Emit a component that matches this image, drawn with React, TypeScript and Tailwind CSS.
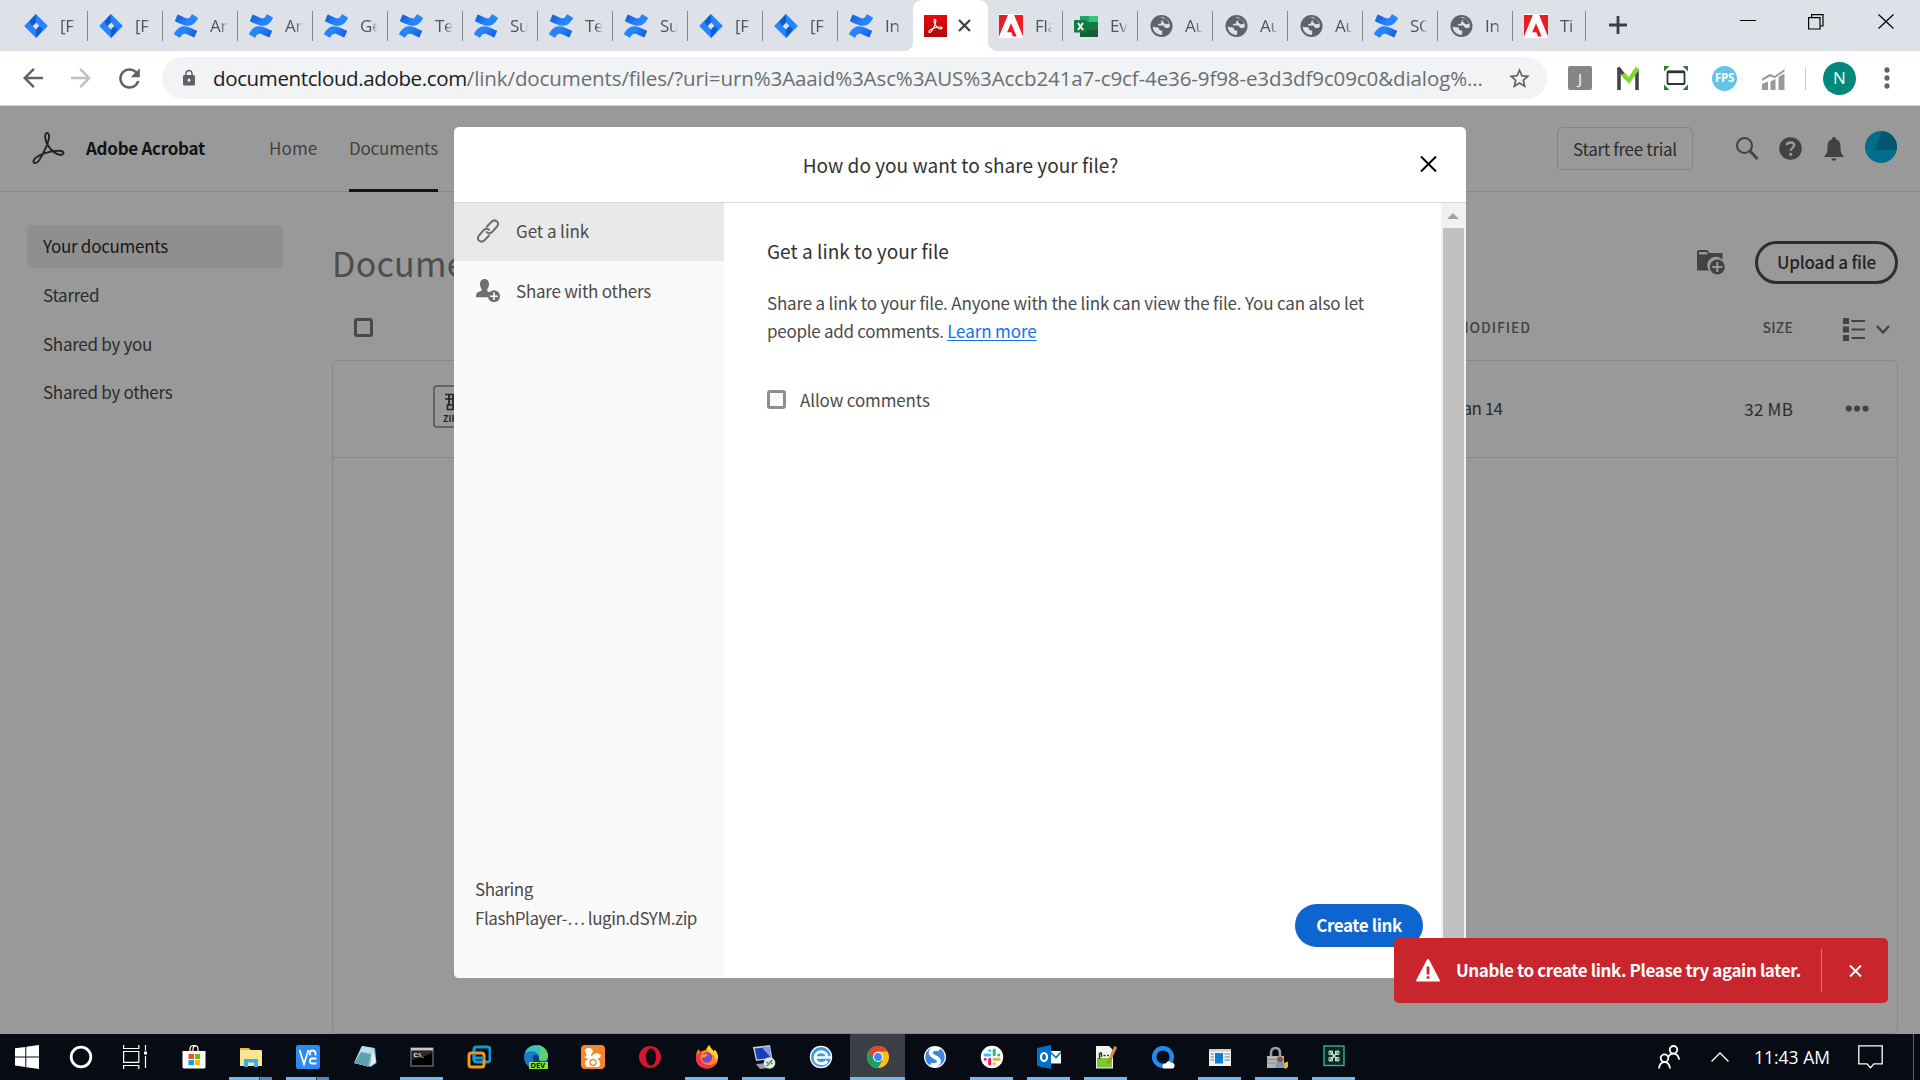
import type { FC, ReactNode } from 'react';
import { MdArrowBack, MdArrowForward, MdLock, MdMoreVert, MdRefresh, MdStarBorder } from 'react-icons/md';
import clsx from 'clsx';

type TabIcon = 'jira' | 'confluence' | 'acrobat' | 'adobe' | 'excel' | 'globe';

interface BrowserTab {
  icon: TabIcon;
  label: string;
  active?: boolean;
}

const TABS: BrowserTab[] = [
  { icon: 'jira', label: '[F' },
  { icon: 'jira', label: '[F' },
  { icon: 'confluence', label: 'An' },
  { icon: 'confluence', label: 'An' },
  { icon: 'confluence', label: 'Ge' },
  { icon: 'confluence', label: 'Te' },
  { icon: 'confluence', label: 'Su' },
  { icon: 'confluence', label: 'Te' },
  { icon: 'confluence', label: 'Su' },
  { icon: 'jira', label: '[F' },
  { icon: 'jira', label: '[F' },
  { icon: 'confluence', label: 'In' },
  { icon: 'acrobat', label: '', active: true },
  { icon: 'adobe', label: 'Fla' },
  { icon: 'excel', label: 'Ev' },
  { icon: 'globe', label: 'Au' },
  { icon: 'globe', label: 'Au' },
  { icon: 'globe', label: 'Au' },
  { icon: 'confluence', label: 'SC' },
  { icon: 'globe', label: 'In' },
  { icon: 'adobe', label: 'Ti' },
];

const TREFOIL =
  'M14.5 .5C11.500 .5 12.300 8 15.500 13C18.500 18 24 22.500 28.500 22.500C32.500 21.500 31.500 18.500 27 18.200C18 18 6 22 2 26.500C-1 30.500 3 32.500 6.500 28C11 21.500 16 10 16.500 5C16.800 2 16 .5 14.500 .5Z';

const JiraIcon = () => (
  <svg width="24" height="24" viewBox="0 0 24 24">
    <path fill="#2684ff" fillRule="evenodd" d="M12 0l11.2 11.2q.8.8 0 1.6L12 24 .8 12.8q-.8-.8 0-1.6zm0 8.6L8.6 12l3.4 3.4 3.4-3.4z" />
    <path fill="#0f5bd0" d="M12 0v8.6L8.6 12 5.5 8.9Q5.6 6.300 12 0zM12 24v-8.600L15.400 12l3.100 3.100Q18.400 17.700 12 24z" />
  </svg>
);

const ConfluenceIcon = () => (
  <svg width="24" height="24" viewBox="0 0 24 24">
    <defs>
      <linearGradient id="cf-a" x1="0" x2="1" y1="0" y2="0.4">
        <stop offset="0" stopColor="#0f5bd3" />
        <stop offset="0.7" stopColor="#2684ff" />
      </linearGradient>
      <linearGradient id="cf-b" x1="1" x2="0" y1="1" y2="0.6">
        <stop offset="0" stopColor="#0f5bd3" />
        <stop offset="0.7" stopColor="#2684ff" />
      </linearGradient>
    </defs>
    <path
      fill="url(#cf-b)"
      d="M.87 18.257c-.248.382-.53.875-.763 1.245a.764.764 0 0 0 .255 1.04l4.965 3.054a.764.764 0 0 0 1.058-.26c.199-.332.454-.763.733-1.221 1.967-3.247 3.945-2.853 7.508-1.146l4.957 2.337a.764.764 0 0 0 1.028-.382l2.364-5.346a.764.764 0 0 0-.382-1 599.851 599.851 0 0 1-4.965-2.361C10.911 10.97 5.224 11.185.87 18.257z"
    />
    <path
      fill="url(#cf-a)"
      d="M23.131 5.743c.249-.405.531-.875.764-1.25a.764.764 0 0 0-.256-1.034L18.675.404a.764.764 0 0 0-1.058.26c-.195.335-.451.763-.734 1.225-1.966 3.246-3.945 2.85-7.508 1.146L4.437.694a.764.764 0 0 0-1.027.382L1.046 6.422a.764.764 0 0 0 .382 1c1.039.49 3.105 1.467 4.965 2.361 6.698 3.246 12.392 3.029 16.738-4.04z"
    />
  </svg>
);

const AcrobatTabIcon = () => (
  <svg width="23" height="22" viewBox="0 0 23 22">
    <defs>
      <linearGradient id="acro" x1="0" x2="0" y1="0" y2="1">
        <stop offset="0" stopColor="#ec0a0a" />
        <stop offset="1" stopColor="#b00a0a" />
      </linearGradient>
    </defs>
    <rect width="23" height="22" fill="url(#acro)" />
    <path d={TREFOIL} transform="translate(4.500 4) scale(0.44)" fill="none" stroke="#fff" strokeWidth="2.600" />
  </svg>
);

const AdobeIcon = () => (
  <svg width="24" height="24" viewBox="0 0 24 24">
    <path fill="#fff" d="M0 0h24v24H0z" />
    <path fill="#ed1c24" d="M13.966 22.624l-1.690-4.281H8.122l3.892-9.144 5.662 13.425zM8.884 1H0v21.624zM24 1h-8.884L24 22.624z" />
  </svg>
);

const ExcelIcon = () => (
  <svg width="24" height="22" viewBox="0 0 24 22">
    <path fill="#21a366" d="M6 1h9v7H6z" />
    <path fill="#33c481" d="M15 1h9v6h-9z" />
    <path fill="#107c41" d="M6 7h9v7H6zM15 7h9v7h-9z" />
    <path fill="#185c37" d="M6 14h18v8H6z" />
    <path fill="#107c41" d="M15 11h9v4h-9z" />
    <rect y="5" width="13" height="12.500" rx="1" fill="#107c41" />
    <path stroke="#fff" strokeWidth="2" d="M4 8l5 7M9 8l-5 7" />
  </svg>
);

const GlobeIcon = () => (
  <svg width="24" height="24" viewBox="0 0 24 24">
    <circle cx="12.500" cy="12" r="11" fill="#5f6368" />
    <path
      fill="#dee1e8"
      d="M3.800 12.500q1.500 1 4.200.8c1.500 0 2 .7 2.200 2 .2 1 1 1.200 2.200 1.200 1.200.2 1 1.500.8 2.700l-.5 1.800C8 21 3.600 17.300 3.800 12.500zM10.800 3.500q2.500-.6 4.700.1c-.2 1.700-.5 2.700-2 3-1.300.3-1.200 1-1.300 2-.2 1.200-1 1.400-2.200 1.400-1 0-1 .6-.8 1.500h4c1.600 0 2 .6 2.300 1.600.3.900 1 .9 2.200.9 1.500 0 2.500-.5 3.200-1.500.2-3.500-1.700-6.500-4.900-8.100"
    />
    <path fill="#5f6368" d="M15.500 4c-.3 2-1 2.800-2.300 3l3 3.200L20 10l-1-3z" />
  </svg>
);

const tabIcon = (icon: TabIcon) => {
  switch (icon) {
    case 'jira':
      return <JiraIcon />;
    case 'confluence':
      return <ConfluenceIcon />;
    case 'acrobat':
      return <AcrobatTabIcon />;
    case 'adobe':
      return <AdobeIcon />;
    case 'excel':
      return <ExcelIcon />;
    default:
      return <GlobeIcon />;
  }
};

const TabStrip = () => (
  <div className="flex h-[51px] bg-[#dee1e8] pl-[13px]">
    {TABS.map((tab, index) =>
      tab.active ? (
        <div key={index} className="relative flex h-[51px] w-[75px] items-center rounded-t-[9px] bg-white pl-[11px]">
          <span className="absolute bottom-0 -left-[9px] size-[9px] bg-[radial-gradient(circle_at_0_0,transparent_9px,white_9px)]" />
          <span className="absolute -right-[9px] bottom-0 size-[9px] bg-[radial-gradient(circle_at_100%_0,transparent_9px,white_9px)]" />
          {tabIcon(tab.icon)}
          <svg width="13" height="13" viewBox="0 0 13 13" className="ml-[11px]">
            <path d="M1 1l11 11M12 1L1 12" stroke="#3c4043" strokeWidth="2.200" />
          </svg>
        </div>
      ) : (
        <div
          key={index}
          className={clsx(
            'relative flex h-[51px] items-center pl-[11px]',
            index === TABS.length - 1 ? 'w-[73px]' : 'w-[75px]',
          )}
        >
          <span className="flex w-6 shrink-0 items-center">{tabIcon(tab.icon)}</span>
          <span className="ml-[12px] w-[21px] text-[17px] leading-[26px] tracking-[-0.3px] whitespace-nowrap text-[#50545a] [mask-image:linear-gradient(to_right,black_50%,transparent_85%)]">
            {tab.label}
          </span>
          {index !== 11 && <span className="ml-auto h-[30px] w-[1.5px] bg-[#85898e]" />}
        </div>
      ),
    )}
    <svg width="18" height="18" viewBox="0 0 18 18" className="mt-4 ml-[23px]">
      <path d="M9 0v18M0 9h18" stroke="#3c4043" strokeWidth="2.800" />
    </svg>
    <svg width="16" height="16" viewBox="0 0 16 16" className="mt-[13px] ml-auto">
      <path d="M0 7.500h16" stroke="#000" />
    </svg>
    <svg width="16" height="16" viewBox="0 0 16 16" className="mt-[14px] ml-[52px]" fill="none" stroke="#000" strokeWidth="1.200">
      <path d="M.6 3.600h11.400v11.400H.6zM3.600 3.600V.6h11.400v11.400h-3" />
    </svg>
    <svg width="16" height="15" viewBox="0 0 16 15" className="mt-[14px] mr-[26px] ml-[54px]">
      <path d="M.5.5l15 14M15.500.5l-15 14" stroke="#000" strokeWidth="1.200" />
    </svg>
  </div>
);

const Toolbar = () => (
  <div className="flex h-[55px] items-center border-b border-[#cfcfcf] bg-white">
    <MdArrowBack className="ml-[18px] size-[30px] text-[#5f6368]" />
    <MdArrowForward className="ml-[18px] size-[30px] text-[#bdc0c4]" />
    <MdRefresh className="ml-[18px] size-[31px] text-[#5f6368]" />
    <div className="ml-[17px] flex h-[42px] w-[1385px] items-center rounded-full bg-[#f1f3f4] pl-[18px]">
      <MdLock className="size-[18px] text-[#5f6368]" />
      <div className="ml-[15px] text-[20.5px] leading-[38px] whitespace-nowrap text-[#6a6e73]">
        <span className="tracking-[-0.37px] text-[#202124]">documentcloud.adobe.com</span>
        <span className="tracking-[-0.1px]">
          /link/documents/files/?uri=urn%3Aaaid%3Asc%3AUS%3Accb241a7-c9cf-4e36-9f98-e3d3df9c09c0&amp;dialog%...
        </span>
      </div>
      <MdStarBorder className="mr-[15px] ml-auto size-[25px] text-[#5f6368]" />
    </div>
    <span className="ml-[21px] flex size-6 items-center justify-center rounded-[2px] bg-[#858585] text-[15px] text-white">
      J
    </span>
    <svg width="24" height="26" viewBox="0 0 24 26" className="ml-[24px]">
      <path d="M3 25V3M21 25V5" fill="none" stroke="#454548" strokeWidth="3.600" />
      <path d="M2 2.500l9 11.500" fill="none" stroke="#454548" strokeWidth="3.600" />
      <path d="M7 9l6 6.500L21.500 3" fill="none" stroke="#85d52c" strokeWidth="4.500" />
    </svg>
    <svg width="24" height="24" viewBox="0 0 24 24" className="ml-[24px]">
      <path d="M0 0h5.500L0 5.500zM24 0v5.500L18.500 0zM0 24v-5.500L5.500 24zM24 24h-5.500l5.500-5.500z" fill="#2e7d32" />
      <rect x="3.500" y="5.500" width="17" height="12.500" rx="1" fill="#fff" stroke="#333" strokeWidth="1.800" />
      <path d="M3.500 6h17" stroke="#333" strokeWidth="2.400" />
    </svg>
    <span className="ml-[24px] flex size-[25px] items-center justify-center rounded-full bg-[#63c3e6] text-[11.5px] font-bold tracking-[-0.3px] text-white">
      FPS
    </span>
    <svg width="24" height="22" viewBox="0 0 24 22" className="mt-1 ml-[24px]" fill="#9a9a9a">
      <path d="M1 15l6-2.500V21H1zM9.500 12.500l5-2.500v11h-5zM17.500 8l6-3.500V21h-6z" />
      <path d="M1 9.500L9 5l5 2L23.500 0v2.500L14 9 9 7.500l-8 4.500z" />
    </svg>
    <span className="ml-[20px] h-[23px] w-px bg-[#c8cbcf]" />
    <span className="ml-[17px] flex size-[33px] items-center justify-center rounded-full bg-[#00897b] text-[17px] text-white">
      N
    </span>
    <MdMoreVert className="ml-[15px] size-8 text-[#5f6368]" />
  </div>
);

const AppHeader = () => (
  <header className="flex h-[86px] border-b border-[#e1e1e1]">
    <svg width="33" height="33" viewBox="-0.500 -0.500 33 33" className="mt-[26px] ml-[32px]" fill="none">
      <path d={TREFOIL} stroke="#3b3b3b" strokeWidth="1.900" />
    </svg>
    <span className="ml-[21px] w-[183px] text-[17px] leading-[84px] font-bold tracking-[-0.28px] text-[#222]">Adobe Acrobat</span>
    <span className="w-[80px] text-[17px] leading-[84px] tracking-[0.1px] text-[#6e6e6e]">Home</span>
    <span className="h-[86px] w-[89px] border-b-[3px] border-[#222] text-[17px] leading-[84px] tracking-[-0.2px] text-[#6e6e6e]">
      Documents
    </span>
    <button
      type="button"
      className="mt-[21px] ml-auto h-[43px] w-[136px] rounded-[5px] border border-[#dcdcdc] text-[17px] leading-[41px] tracking-[-0.31px] text-[#4b4b4b]"
    >
      Start free trial
    </button>
    <svg width="23" height="23" viewBox="0 0 23 23" className="mt-[31px] ml-[43px]" fill="none" stroke="#6e6e6e" strokeWidth="2">
      <circle cx="8.500" cy="8.500" r="7.500" />
      <path d="M14 14l7.500 8" strokeWidth="2.800" />
    </svg>
    <svg width="23" height="23" viewBox="0 0 23 23" className="mt-[31px] ml-[20px]">
      <circle cx="11.500" cy="11.500" r="11.300" fill="#6e6e6e" />
      <path d="M7.800 8.300C8 4.500 15.200 4.500 15.200 8.300c0 2.400-3.500 2.700-3.500 5.400" fill="none" stroke="#fff" strokeWidth="2.400" />
      <circle cx="11.700" cy="17.300" r="1.600" fill="#fff" />
    </svg>
    <svg width="20" height="24" viewBox="0 0 20 24" className="mt-[31px] ml-[22px]" fill="#6e6e6e">
      <path d="M10 0c1.300 0 2 .9 2 2.200 3.500 1 4.500 4 4.500 7.500 0 6 1 7.300 3 9.300V20H.5v-1c2-2 3-3.300 3-9.300C3.500 6.200 4.500 3.200 8 2.200 8 .9 8.700 0 10 0zM7.500 21.500h5c-.3 3-4.700 3-5 0z" />
    </svg>
    <svg width="32" height="32" viewBox="0 0 32 32" className="mt-[25px] mr-[23px] ml-[21px]">
      <circle cx="16" cy="16" r="16" fill="#00b8e6" />
      <path d="M16 0C27 0 32 9 32 16v3H9.500L17 0z" fill="#0090b8" />
    </svg>
  </header>
);

const NAV_ITEMS = ['Your documents', 'Starred', 'Shared by you', 'Shared by others'];

const SideNav = () => (
  <nav className="mt-[33px] ml-[27px] flex w-[256px] flex-col gap-[5.8px] text-[17px] leading-[41px] tracking-[-0.28px] text-[#4b4b4b]">
    {NAV_ITEMS.map((item, index) => (
      <span key={item} className={clsx('h-[43px] rounded-[5px] pl-4', index === 0 && 'bg-[#eee] text-[#2c2c2c]')}>
        {item}
      </span>
    ))}
  </nav>
);

const FileTable = () => (
  <main className="mr-[22px] ml-[49px] flex flex-1 flex-col">
    <div className="mt-[49px] flex h-[43px] items-center">
      <h1 className="text-[34px] leading-[43px] tracking-[0.25px] text-[#808080]">Documents</h1>
      <svg width="28" height="25" viewBox="0 0 28 25" className="ml-auto">
        <path fill="#6e6e6e" d="M0 1.500L1.500 0H10l2.500 3H25.500v7A8.500 8.500 0 0 0 12 20.500H0z" />
        <path fill="#fff" d="M2 2h7.500l1.500 2.500H2z" />
        <circle cx="20.300" cy="17" r="7.500" fill="#6e6e6e" />
        <path stroke="#fff" strokeWidth="2" d="M20.300 12v10M15.300 17h10" />
      </svg>
      <button
        type="button"
        className="ml-[30px] h-[43px] w-[143px] rounded-full border-[3px] border-[#4b4b4b] pb-[2px] text-[17px] leading-[35px] font-medium tracking-[-0.22px] whitespace-nowrap text-[#3b3b3b]"
      >
        Upload a file
      </button>
    </div>

    <div className="mt-[33px] flex h-5 items-center pr-2 text-[14px] leading-5 font-medium text-[#6e6e6e]">
      <span className="ml-[22px] size-[19px] rounded-[3px] border-[3px] border-[#7a7a7a]" />
      <span className="ml-auto w-[200px] tracking-[0.9px]">MODIFIED</span>
      <span className="w-[136px] text-right tracking-[0.2px]">SIZE</span>
      <svg width="22" height="23" viewBox="0 0 22 23" className="mt-[5px] ml-[50px]" fill="#6e6e6e">
        <path d="M0 0h6v6H0zM0 8.500h6v6H0zM0 17h6v6H0zM8.500 2H22v2H8.500zM8.500 10.500H22v2H8.500zM8.500 19H22v2H8.500z" />
      </svg>
      <svg width="14" height="9" viewBox="0 0 14 9" className="mt-1 ml-[11px]">
        <path d="M1 1l6 6.500L13 1" fill="none" stroke="#6e6e6e" strokeWidth="2.400" />
      </svg>
    </div>

    <div className="mt-[23px] flex-1 rounded-[6px] border border-[#e1e1e1]">
      <div className="flex h-[97px] items-center border-b border-[#e1e1e1] pr-7 pb-[1px] text-[17px] leading-[30px] text-[#4b4b4b]">
        <svg width="43" height="43" viewBox="0 0 43 43" className="mb-[5px] ml-[100px]">
          <rect x="1" y="1" width="41" height="41" rx="3" fill="none" stroke="#8a8a8a" strokeWidth="1.500" />
          <path d="M12 9.500h12M12 14h12M16 9.500v10M20 9.500V20M14.500 20H20v4.500h-5.500z" stroke="#3b3b3b" strokeWidth="1.700" fill="none" />
          <text x="10" y="37" fontSize="9" fontWeight="700" fill="#3b3b3b">
            ZIP
          </text>
        </svg>
        <span className="ml-auto w-[203px] pb-0.5 tracking-[-0.55px]">Jan 14</span>
        <span className="w-[136px] text-right tracking-[0.2px]">32 MB</span>
        <svg width="24" height="7" viewBox="0 0 24 7" className="ml-[52px]" fill="#6e6e6e">
          <circle cx="3.800" cy="3.500" r="3.100" />
          <circle cx="12.100" cy="3.500" r="3.100" />
          <circle cx="20.500" cy="3.500" r="3.100" />
        </svg>
      </div>
    </div>
  </main>
);

const LinkIcon = () => (
  <svg width="24" height="24" viewBox="0 0 24 24" fill="none" stroke="#6e6e6e" strokeWidth="2" strokeLinecap="round">
    <path d="M11 7.500l4.500-4.700c2-2 4-1.600 5.500-.3s1.500 3.500-.2 5.300l-4.500 5c-1.800 1.800-4 1.800-5.500.3" />
    <path d="M13 16.500l-4.500 4.700c-2 2-4 1.600-5.500.3S1.500 18 3.200 16.200l4.500-5c1.800-1.800 4-1.800 5.500-.3" />
  </svg>
);

const PersonAddIcon = () => (
  <svg width="24" height="24" viewBox="0 0 24 24">
    <path
      fill="#6e6e6e"
      d="M8.500 0c3 0 4.500 2.300 4.500 5.200 0 2-.8 3.800-1.800 5v1.600c0 .8 2.300 1.300 3 1.800-1.300 1.200-2 2.800-2 4.600H0c0-4 1-5 5.800-6.400v-1.600C4.800 9 4 7.200 4 5.200 4 2.300 5.500 0 8.500 0z"
    />
    <circle cx="18" cy="17.300" r="6" fill="#6e6e6e" />
    <path stroke="#fff" strokeWidth="1.600" d="M18 13.500v7.600M14.200 17.300h7.600" />
  </svg>
);

const ShareDialog = () => (
  <section className="flex h-[851px] w-[1012px] flex-col overflow-hidden rounded-[5px] bg-white text-[17px] text-[#4b4b4b]">
    <div className="relative flex h-[76px] items-center justify-center border-b border-[#d9d9d9]">
      <h2 className="pl-px text-[19px] leading-[30px] tracking-[0.03px] text-[#323232]">How do you want to share your file?</h2>
      <svg width="17" height="16" viewBox="0 0 17 16" className="absolute top-[29px] right-[29px]">
        <path d="M1 .5l15 15M16 .5l-15 15" stroke="#000" strokeWidth="2" />
      </svg>
    </div>
    <div className="flex flex-1">
      <aside className="flex w-[270px] flex-col bg-[#fafafa]">
        <div className="flex h-[58px] items-center bg-[#e9e9e9] pb-0.5 pl-[22px]">
          <LinkIcon />
          <span className="ml-4 leading-[28px] tracking-[-0.07px]">Get a link</span>
        </div>
        <div className="flex h-[60px] items-center pl-[22px]">
          <PersonAddIcon />
          <span className="ml-4 leading-[28px] tracking-[-0.25px]">Share with others</span>
        </div>
        <div className="mt-auto pb-[46px] pl-[21px] leading-[29px] whitespace-nowrap">
          <div className="tracking-[-0.5px]">Sharing</div>
          <div className="tracking-[-0.46px]">FlashPlayer-… lugin.dSYM.zip</div>
        </div>
      </aside>
      <div className="flex flex-1 flex-col pt-[34px] pr-[18px] pb-[31px] pl-[43px]">
        <h3 className="text-[19px] leading-[28px] tracking-[0.03px] text-[#323232]">Get a link to your file</h3>
        <p className="mt-[24px] leading-[28px] tracking-[-0.18px] whitespace-nowrap">
          Share a link to your file. Anyone with the link can view the file. You can also let
          <br />
          <span className="tracking-[-0.27px]">people add comments. </span>
          <a className="tracking-[-0.1px] text-[#1473e6] underline decoration-1 underline-offset-2">Learn more</a>
        </p>
        <label className="mt-[40px] flex items-center leading-[28px] tracking-[-0.14px]">
          <span className="mr-[14px] size-[19px] rounded-[3px] border-[3px] border-[#8e8e8e] bg-[#fafafa]" />
          <span className="pt-px">Allow comments</span>
        </label>
        <button
          type="button"
          className="mt-auto ml-auto h-[43px] w-[128px] rounded-full bg-[#0d66d0] pb-[2px] leading-[41px] font-bold tracking-[-0.4px] text-white"
        >
          Create link
        </button>
      </div>
      <div className="flex w-[25px] flex-col bg-[#f1f1f1] px-[2px]">
        <svg width="21" height="25" viewBox="0 0 21 25">
          <path d="M4 16l6-6 6 6z" fill="#a3a3a3" />
        </svg>
        <div className="flex-1 bg-[#c1c1c1]" />
      </div>
    </div>
  </section>
);

const Toast = () => (
  <div className="absolute right-[32px] bottom-[31px] flex h-[65px] w-[494px] items-center rounded-[5px] bg-[#c9252d] text-white">
    <svg width="24" height="23" viewBox="0 0 24 23" className="ml-[22px]">
      <path d="M12 0q.8 0 1.200.9L23.700 21q.7 1.500-.8 1.500H1.100Q-.4 22.500.3 21L10.800.9Q11.200 0 12 0z" fill="#fff" />
      <path d="M10.600 7.500h2.800v8h-2.800zM10.600 17.200h2.800v2.600h-2.800z" fill="#c9252d" />
    </svg>
    <span className="ml-4 pb-0.5 text-[17px] leading-[30px] font-bold tracking-[-0.38px] whitespace-nowrap">
      Unable to create link. Please try again later.
    </span>
    <span className="ml-auto h-[43px] w-px bg-[#dd7579]" />
    <svg width="13" height="12" viewBox="0 0 13 12" className="mr-[26px] ml-[27px]">
      <path d="M1 .5l11 11M12 .5L1 11.500" stroke="#fff" strokeWidth="2" />
    </svg>
  </div>
);

interface TaskItem {
  name: string;
  state?: 'open' | 'multi' | 'active';
  art: ReactNode;
}

const TASK_ITEMS: TaskItem[] = [
  {
    name: 'store',
    art: (
      <>
        <path d="M8 7V4q0-3.500 4-3.500T16 4v3M11 6V4q0-3 3-3" fill="none" stroke="#fff" strokeWidth="1.200" />
        <path d="M.5 6h23v16q0 1.500-1.500 1.500H2Q.5 23.500.5 22z" fill="#fff" />
        <path d="M6.500 9H12v5H6.500z" fill="#f25022" />
        <path d="M13 9h5v5h-5z" fill="#7fba00" />
        <path d="M6.500 15H12v5H6.500z" fill="#00a4ef" />
        <path d="M13 15h5v5h-5z" fill="#ffb900" />
      </>
    ),
  },
  {
    name: 'explorer',
    state: 'multi',
    art: (
      <>
        <path d="M1 3h9l2 2.500H1z" fill="#e8b73a" />
        <path d="M1 5h21q1 0 1 1v15H1z" fill="#ffe394" />
        <path d="M5 14h14v8h-4v-4.500H9V22H5z" fill="#3badea" />
      </>
    ),
  },
  {
    name: 'vnc',
    state: 'multi',
    art: (
      <>
        <rect width="24" height="24" rx="2" fill="#2a8bf2" />
        <path d="M3.500 5l4.500 14L12.500 5M14 10.500V7.500Q14 5.500 16.500 5.500T19.500 8v2.500M20.500 13.500H16q-2 0-2 2.500t2 2.500h4.500" fill="none" stroke="#fff" strokeWidth="1.800" />
      </>
    ),
  },
  {
    name: 'notepad',
    art: (
      <>
        <path d="M9 1l13 2 1.500 15-6 4L1 18z" fill="#7fb9c6" />
        <path d="M9 1l11 2-5 18.500L1 18z" fill="#b8dfe6" />
        <path d="M8 7l10 2-3 12.500L1 18z" fill="#5ba3b3" />
        <path d="M20 3l3 14-6 4.500z" fill="#e9eef0" />
      </>
    ),
  },
  {
    name: 'cmd',
    state: 'open',
    art: (
      <>
        <rect x="1" y="3" width="22" height="18" fill="#000" stroke="#8d8d8d" />
        <path d="M1 3h22v2.500H1z" fill="#c9c9c9" />
        <path d="M2 15q10-2 20-7V6H2z" fill="#2a2a2a" />
        <text x="3.500" y="12" fontSize="6" fontWeight="700" fill="#fff">
          C:\_
        </text>
      </>
    ),
  },
  {
    name: 'vmware',
    art: (
      <>
        <rect x="7" y="2" width="16" height="15" rx="2.500" fill="none" stroke="#1697d1" strokeWidth="3" />
        <rect x="2" y="8" width="15" height="14" rx="2.500" fill="none" stroke="#f29a1e" strokeWidth="3" />
        <path d="M7 8.500V13h10" fill="none" stroke="#1697d1" strokeWidth="3" />
      </>
    ),
  },
  {
    name: 'edge-dev',
    art: (
      <>
        <circle cx="12" cy="12" r="12" fill="#1b78c9" />
        <path d="M1 8C4-2 21-3 24 10c0 6-5 7-9 5 2-8-7-11-14-7z" fill="#3cc0c0" />
        <path d="M14 0c6 1 10 6 10 11 0 5-6 6-9 4 2-6 2-11-1-15z" fill="#5fd070" />
        <path d="M9 12c0-3 6-3 6 1-1 3 2 4 6 3v2H10q-2-3-1-6z" fill="#0c3d78" />
        <rect x="5" y="17" width="19" height="7" fill="#86e23a" />
        <text x="6.500" y="23.300" fontSize="7.500" fontWeight="700" fill="#0a1a05">
          DEV
        </text>
      </>
    ),
  },
  {
    name: 'uc',
    art: (
      <>
        <rect width="24" height="24" rx="4" fill="#f5862a" />
        <path
          d="M3.500 12C6 11 6 9 4.500 7.500 3 5 5 2.500 8 3c4 .5 5 4 2.500 6-1.500 1.300-.5 2.500 1 1.500 1.500-2 4-3.500 8.500-.500-.5 3-2 3.500-4 3.500 3 2 4 5.500 2 8.500H6c-3-3-2.500-6 1.500-8-1.500-.5-3-1-4-2z"
          fill="#fff"
        />
        <circle cx="12" cy="17.500" r="3" fill="none" stroke="#f5862a" strokeWidth="1.300" />
      </>
    ),
  },
  {
    name: 'opera',
    art: (
      <path
        fill="#d9152c"
        fillRule="evenodd"
        d="M12 1a11 11 0 1 1 0 22 11 11 0 0 1 0-22zm1 2.500C9.500 3.500 8 8 8 12s1.500 8.500 5 8.500 5-4.500 5-8.500-1.500-8.500-5-8.500z"
      />
    ),
  },
  {
    name: 'firefox',
    state: 'open',
    art: (
      <>
        <path d="M12 23.500C5 23.500 1 18 1 13c0-4 1-7 2.500-9l1.500 3c2-1 4-2 6-2 0-2 2-4 3.500-5 .5 3 3 4 4 6.500L20 5c2 2 3 5 3 8 0 6-5 10.500-11 10.500z" fill="#ff8a16" />
        <path d="M1 13c0 6 5 10.500 11 10.500 5 0 9-3 10.500-7C17 22 8 21 6 15 4 11 6 9 8 8 4 7 1 9 1 13z" fill="#fa2d55" />
        <path d="M14.500 0c.5 3 3 4 4 6.500L20 5c2 2 3 5 3 8l-2 2C20 9 14 8 12 5c.5-2 1-4 2.500-5z" fill="#ffd233" />
        <circle cx="12" cy="12.500" r="5.200" fill="#7a44d6" />
        <path d="M7 10q4-2 6 0l-3 2.500H7z" fill="#ff9a1f" />
      </>
    ),
  },
  {
    name: 'remote',
    state: 'open',
    art: (
      <>
        <path d="M1 2l17-2 2.500 14L4 16z" fill="#c6cdda" />
        <path d="M2.800 3.500L17 1.800l1.800 11L5 14.500z" fill="#1c3fb5" />
        <path d="M10 2.600l7-.8 1.800 11z" fill="#7f9df0" />
        <path d="M4 19l10-1 2 5-8 1z" fill="#9aa0a8" />
        <circle cx="17.500" cy="18" r="5.800" fill="#e8e8e8" />
        <path d="M14.500 17l2.500 2-2.500 2M20.500 15L18 17l2.500 2" fill="none" stroke="#3a9a3a" strokeWidth="1.500" />
      </>
    ),
  },
  {
    name: 'ie',
    art: (
      <>
        <circle cx="12" cy="12" r="11.200" fill="#fff" />
        <circle cx="12" cy="12" r="10" fill="#3d9be3" />
        <path d="M6 12.500h17" stroke="#fff" strokeWidth="2.400" />
        <path d="M18 12.500c0-7.500-11.500-8-12 0 .3 7 9 7.500 12 3.500" fill="none" stroke="#fff" strokeWidth="3" />
      </>
    ),
  },
  {
    name: 'chrome',
    state: 'active',
    art: (
      <>
        <circle cx="12" cy="12" r="11" fill="#fbc116" />
        <path d="M2.500 6.500A11 11 0 0 0 12 23l4.500-8L12 12z" fill="#1aa15f" />
        <path d="M2.500 6.500A11 11 0 0 1 21.500 6.500H12A5.500 5.500 0 0 0 7 14.500z" fill="#db4437" />
        <circle cx="12" cy="12" r="5" fill="#fff" />
        <circle cx="12" cy="12" r="3.900" fill="#4285f4" />
      </>
    ),
  },
  {
    name: 'sogou',
    art: (
      <>
        <circle cx="12" cy="12" r="11" fill="#fff" />
        <circle cx="12" cy="12" r="9.800" fill="#3d86dd" />
        <path d="M16.500 4.500C12 2.500 6.500 5 8 9c1.500 3.500 7.500 3 8 7 .3 3-4 5.500-8.500 3.500" fill="none" stroke="#fff" strokeWidth="4" />
      </>
    ),
  },
  {
    name: 'slack',
    state: 'open',
    art: (
      <>
        <circle cx="12" cy="12" r="11.200" fill="#fff" />
        <g strokeWidth="3" strokeLinecap="round">
          <path d="M9.700 5.500v.1M5 10h4.700" stroke="#36c5f0" />
          <path d="M14.200 5v4.700M18.700 10h.1" stroke="#2eb67d" />
          <path d="M18.900 14.300h-4.700M14.200 18.700v.1" stroke="#ecb22e" />
          <path d="M9.700 19v-4.700M5.200 14.300h.1" stroke="#e01e5a" />
        </g>
      </>
    ),
  },
  {
    name: 'outlook',
    state: 'open',
    art: (
      <>
        <path d="M12 6h12v12.500H12z" fill="#fff" />
        <path d="M13 7l6 5.500L24 7" fill="none" stroke="#0072c6" strokeWidth="1.600" />
        <path d="M0 3l14-3v24L0 21z" fill="#0072c6" />
        <ellipse cx="7" cy="12" rx="3" ry="4" fill="none" stroke="#fff" strokeWidth="2.200" />
      </>
    ),
  },
  {
    name: 'notepad-plus',
    state: 'open',
    art: (
      <>
        <path d="M2 1h13l4 4v18.500H2z" fill="#f3f6ee" />
        <path d="M3 13h15v9.500H3z" fill="#7dc832" />
        <path d="M5.500 14V8.500q2-1.500 2 0V12M9.500 10.500h2M13 10.500h2" stroke="#333" strokeWidth="1.500" fill="none" />
        <path d="M20.500 1l2.500 1.500L16 17l-2.500 1.500z" fill="#e3a02c" stroke="#8a5c14" strokeWidth=".6" />
      </>
    ),
  },
  {
    name: 'qq-browser',
    art: (
      <>
        <circle cx="12" cy="12" r="8.800" fill="none" stroke="#1f8df0" strokeWidth="4.500" />
        <path d="M12 23.500q-2-5 3-5 2-4 5-1 4 0 3.500 4-.5 2-2 2z" fill="#fff" />
      </>
    ),
  },
  {
    name: 'window',
    state: 'open',
    art: (
      <>
        <path d="M1 4h22v17H1z" fill="#f2f2f2" />
        <path d="M1 4h22v2.500H1z" fill="#cfcfcf" />
        <path d="M7 8h8v10.500H7z" fill="#0c7cd5" />
        <path d="M2.500 9H6M2.500 12H6M2.500 15H6M16.500 9H22M16.500 12H22M16.500 15H22" stroke="#7a7a7a" />
      </>
    ),
  },
  {
    name: 'lock',
    state: 'open',
    art: (
      <>
        <path d="M6 12V8q0-5 4.500-5T15 8v4" fill="none" stroke="#9b9b9b" strokeWidth="2.600" />
        <path d="M2 11h17v12H2z" fill="#b4b4b4" />
        <path d="M2 14.500h17M2 18h17" stroke="#8c8c8c" />
        <circle cx="15" cy="14.500" r="3" fill="#8a5a34" />
        <path d="M10 23q0-5 5-5t5 5z" fill="#6f9bd1" />
        <path d="M19 18l4-1.500V22l-2.500 2-2-2z" fill="#e9b91f" />
      </>
    ),
  },
  {
    name: 'x-server',
    state: 'open',
    art: (
      <>
        <rect x="2" y="1" width="20" height="19.500" fill="#08281d" stroke="#3fae84" strokeWidth="1.400" />
        <path d="M8 6.500l8 9M16 6.500l-8 9" stroke="#bfe5d6" strokeWidth="1.600" />
        <path d="M7 9.500V6h3.500v3.500zM13.500 9.500V6H17v3.500zM7 12.500V16h3.500v-3.500zM13.500 16H17v-3.500h-3.500z" fill="none" stroke="#bfe5d6" strokeWidth="1" />
      </>
    ),
  },
];

const TaskButton: FC<TaskItem> = ({ state, art }) => (
  <div
    className={clsx(
      'relative mr-[2px] flex h-[46px] w-[55px] items-center justify-center',
      state === 'active' && 'bg-[#3b3e45]',
    )}
  >
    <svg width="24" height="24" viewBox="0 0 24 24">
      {art}
    </svg>
    {state && (
      <span
        className={clsx(
          'absolute bottom-0 flex h-[3px] justify-end bg-[#78b7ea]',
          state === 'active' ? 'w-full' : 'w-[43px]',
        )}
      >
        {state === 'multi' && <span className="w-[13px] border-l border-[#2b4560] bg-[#5888b3]" />}
      </span>
    )}
  </div>
);

const Taskbar = () => (
  <footer className="flex h-[46px] items-center bg-[#060b14]">
    <div className="mr-[4px] flex">
      <span className="flex w-[54px] justify-center">
        <svg width="24" height="24" viewBox="0 0 24 24" fill="#fff">
          <path d="M0 3.300L10.300 1.900v9.500H0zM11.300 1.700L24 0v11.400H11.300zM0 12.500h10.300V22L0 20.600zM11.300 12.500H24V24l-12.700-1.800z" />
        </svg>
      </span>
      <span className="flex w-[54px] justify-center">
        <svg width="24" height="24" viewBox="0 0 24 24">
          <circle cx="12" cy="12" r="9.800" fill="none" stroke="#fff" strokeWidth="2.800" />
        </svg>
      </span>
      <span className="flex w-[54px] justify-center">
        <svg width="24" height="24" viewBox="0 0 24 24" fill="none" stroke="#fff" strokeWidth="1.200">
          <path d="M.6 0v3.500h15.200V0M.6 24v-3.500h15.200V24M.6 6.500h15.200v10.800H.6zM22.500 0v5.500M22.500 11v12" />
          <path d="M21 6.500h3v3h-3z" fill="#fff" stroke="none" />
        </svg>
      </span>
    </div>
    {TASK_ITEMS.map(item => (
      <TaskButton key={item.name} {...item} />
    ))}
    <svg width="22" height="24" viewBox="0 0 22 24" className="ml-auto" fill="none" stroke="#fff" strokeWidth="1.800">
      <circle cx="15.500" cy="4.800" r="3.800" />
      <path d="M10.500 12q1-3.400 5-3.400 4.500 0 5.700 6" />
      <circle cx="6.500" cy="13.200" r="3.800" />
      <path d="M.9 23.500q.8-6.400 5.600-6.400t5.600 6.400" />
    </svg>
    <svg width="18" height="10" viewBox="0 0 18 10" className="ml-[31px]">
      <path d="M.5 9.500L9 1l8.500 8.500" fill="none" stroke="#fff" strokeWidth="1.300" />
    </svg>
    <span className="ml-[25px] w-[76px] text-[17.5px] leading-[46px] whitespace-nowrap text-white">11:43 AM</span>
    <svg width="25" height="24" viewBox="0 0 25 24" className="ml-[28px]">
      <path d="M.8.8h23.400v18H16l-3.500 4-3.500-4H.8z" fill="none" stroke="#fff" strokeWidth="1.300" />
    </svg>
    <span className="mr-1.5 ml-[30px] h-[46px] w-px bg-[#5b5f66]" />
  </footer>
);

const App: FC = () => (
  <div className="flex h-[1080px] w-[1920px] flex-col overflow-hidden bg-white font-['Open_Sans','Noto_Sans',sans-serif]">
    <TabStrip />
    <Toolbar />
    <div className="relative flex h-[928px] flex-col font-['Noto_Sans_CJK_SC','Noto_Sans',sans-serif]">
      <AppHeader />
      <div className="flex flex-1">
        <SideNav />
        <FileTable />
      </div>
      <div className="absolute inset-0 flex justify-center bg-black/40 pt-[21px]">
        <ShareDialog />
      </div>
      <Toast />
    </div>
    <Taskbar />
  </div>
);

export default App;
